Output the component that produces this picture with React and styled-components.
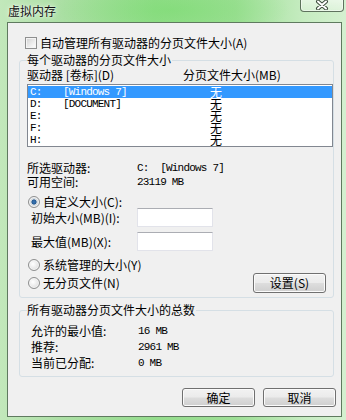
import React from "react";
import styled, { createGlobalStyle } from "styled-components";

const Global = createGlobalStyle`
  html, body { margin: 0; padding: 0; background: #a9e3a2; }
  body { font-family: "Noto Sans CJK SC", "Noto Sans", sans-serif; }
`;

const cjk = `"Noto Sans CJK SC", "Noto Sans", sans-serif`;
const mono = `"Liberation Mono", "Noto Sans CJK SC", monospace`;

const Window = styled.div`
  width: 346px;
  height: 420px;
  box-sizing: border-box;
  display: flex;
  flex-direction: column;
  padding: 0 4px 3px 7px;
  background:
    radial-gradient(ellipse 120px 30px at 170px 10px, rgba(120, 220, 110, 0.55), rgba(120, 220, 110, 0) 100%),
    linear-gradient(90deg, #c2e8bb 0%, #acdfa5 18%, #95dd8d 45%, #9edf96 68%, #c6ecc1 88%, #d4f0d0 100%);
  overflow: hidden;
`;

const TitleBar = styled.div`
  height: 22px;
  display: flex;
  justify-content: space-between;
  align-items: flex-start;
  margin-left: 1px;
`;

const Title = styled.div`
  font-family: ${cjk};
  font-size: 12px;
  line-height: 22px;
  color: #111;
  text-shadow: 0 0 6px rgba(255, 255, 255, 0.9), 0 0 2px rgba(255, 255, 255, 0.8);
`;

const CloseButton = styled.div`
  width: 44px;
  height: 13px;
  margin-right: -2px;
  margin-top: -1px;
  box-sizing: border-box;
  border: 1px solid rgba(50, 70, 50, 0.75);
  border-top: none;
  border-radius: 0 0 4px 4px;
  background: linear-gradient(180deg, rgba(255, 255, 255, 0.55), rgba(255, 255, 255, 0.25));
  box-shadow: inset 0 0 0 1px rgba(255, 255, 255, 0.45);
  display: flex;
  align-items: center;
  justify-content: center;
`;

const Panel = styled.div`
  flex: 1;
  background: #f0f0f0;
  border: 1px solid #5f7a5f;
  display: flex;
  flex-direction: column;
  padding-top: 13px;
`;

const CheckRow = styled.label`
  display: flex;
  align-items: center;
  gap: 3px;
  height: 14px;
  margin-left: 17px;
  font-family: ${cjk};
  font-size: 12px;
  line-height: 14px;
  color: #000;
`;

const CheckBox = styled.span`
  width: 12px;
  height: 12px;
  box-sizing: border-box;
  border: 1px solid #8e8f8f;
  background: linear-gradient(135deg, #cfcfcf 0%, #eeeeee 60%, #ffffff 100%);
  box-shadow: inset 0 0 0 1px #f4f4f4;
`;

const Group = styled.fieldset`
  margin: ${(p) => p.$mt}px 7px 0 11px;
  padding: ${(p) => p.$pt}px 0 ${(p) => p.$pb}px 7px;
  min-width: 0;
  border: 1px solid #d5dfe5;
  border-radius: 3px;
  display: flex;
  flex-direction: column;
`;

const Legend = styled.legend`
  padding: 0 1px 0 0;
  margin: 0;
  font-family: ${cjk};
  font-size: 12px;
  line-height: 14px;
  color: #000;
`;

const TextRow = styled.div`
  display: grid;
  grid-template-columns: ${(p) => p.$cols};
  height: ${(p) => p.$h || 14}px;
  align-items: center;
  margin-top: ${(p) => p.$mt || 0}px;
  padding-left: ${(p) => p.$pl || 0}px;
  font-family: ${cjk};
  font-size: 12px;
  line-height: 14px;
  color: #000;
  white-space: nowrap;
`;

const Mono = styled.span`
  font-family: ${mono};
  font-size: 11px;
  letter-spacing: -0.8px;
  white-space: pre;
`;

const ListBox = styled.div`
  margin-top: 2px;
  width: 306px;
  box-sizing: border-box;
  border: 1px solid #828790;
  background: #fff;
  padding-top: 1px;
  display: flex;
  flex-direction: column;
`;

const ListRow = styled.div`
  display: grid;
  grid-template-columns: 33px 147px auto;
  height: 12px;
  line-height: 12px;
  padding-left: 2px;
  align-items: center;
  background: ${(p) => (p.$selected ? "#3399ff" : "transparent")};
  color: ${(p) => (p.$selected ? "#fff" : "#000")};
  font-family: ${mono};
  font-size: 11px;
  letter-spacing: -0.8px;
  white-space: pre;
`;

const Size = styled.span`
  font-family: ${cjk};
  font-size: 12px;
  letter-spacing: 0;
  line-height: 12px;
`;

const RadioRow = styled.div`
  display: flex;
  align-items: center;
  gap: 3px;
  height: ${(p) => p.$h || 14}px;
  margin-top: ${(p) => p.$mt || 0}px;
  padding-left: 1px;
  font-family: ${cjk};
  font-size: 12px;
  line-height: 14px;
  color: #000;
  white-space: nowrap;
`;

const Radio = styled.span`
  width: 12px;
  height: 12px;
  box-sizing: border-box;
  border-radius: 50%;
  border: 1px solid #8e8f8f;
  flex: none;
  background: ${(p) =>
    p.$checked
      ? "radial-gradient(circle at 50% 50%, #3a78b8 0%, #255a92 32%, #cfd6dc 40%, #f2f2f2 100%)"
      : "radial-gradient(circle at 40% 40%, #ffffff 0%, #e8e8e8 55%, #cfcfcf 100%)"};
  box-shadow: inset 0 0 0 1px #f6f6f6;
`;

const InputRow = styled.div`
  display: grid;
  grid-template-columns: 106px 76px;
  align-items: center;
  height: 19px;
  margin-top: ${(p) => p.$mt || 0}px;
  padding-left: 4px;
  font-family: ${cjk};
  font-size: 12px;
  line-height: 14px;
  color: #000;
  white-space: nowrap;
`;

const TextBox = styled.div`
  height: 19px;
  box-sizing: border-box;
  background: #fff;
  border: 1px solid #e2e3ea;
  border-top-color: #abadb3;
`;

const SettingsRow = styled.div`
  display: flex;
  align-items: center;
  justify-content: space-between;
  height: 20px;
  margin-top: 1px;
  padding-left: 1px;
  padding-right: 7px;
  font-family: ${cjk};
  font-size: 12px;
  line-height: 14px;
  color: #000;
`;

const RadioLabel = styled.div`
  display: flex;
  align-items: center;
  gap: 3px;
`;

const Button = styled.button`
  width: ${(p) => p.$w}px;
  height: ${(p) => p.$h || 19}px;
  box-sizing: border-box;
  padding: 0;
  border: 1px solid #707070;
  border-radius: 3px;
  background: linear-gradient(180deg, #f2f2f2 0%, #ebebeb 48%, #dddddd 52%, #cfcfcf 100%);
  box-shadow: inset 0 0 0 1px #fbfbfb;
  font-family: ${cjk};
  font-size: 12px;
  line-height: 14px;
  color: #000;
  display: flex;
  align-items: center;
  justify-content: center;
`;

const ButtonBar = styled.div`
  display: flex;
  justify-content: flex-end;
  gap: 8px;
  margin: 11px 5px 9px 0;
`;

export default function App() {
  const drives = [
    { d: "C:", v: "[Windows 7]", selected: true },
    { d: "D:", v: "[DOCUMENT]" },
    { d: "E:", v: "" },
    { d: "F:", v: "" },
    { d: "H:", v: "" },
  ];
  return (
    <>
      <Global />
      <Window>
        <TitleBar>
          <Title>虚拟内存</Title>
          <CloseButton>
            <svg width="14" height="10" viewBox="0 0 14 10">
              <path d="M3 1.5 L11 8.5 M11 1.5 L3 8.5" stroke="#3b4a3b" strokeWidth="4" strokeLinecap="round" />
              <path d="M3 1.5 L11 8.5 M11 1.5 L3 8.5" stroke="#ffffff" strokeWidth="2" strokeLinecap="round" />
            </svg>
          </CloseButton>
        </TitleBar>
        <Panel>
          <CheckRow>
            <CheckBox />
            <span>自动管理所有驱动器的分页文件大小(A)</span>
          </CheckRow>
          <Group $mt={3} $pt={1} $pb={4}>
            <Legend>每个驱动器的分页文件大小</Legend>
            <TextRow $cols="156px auto">
              <span>驱动器 [卷标](D)</span>
              <span>分页文件大小(MB)</span>
            </TextRow>
            <ListBox>
              {drives.map((r) => (
                <ListRow key={r.d} $selected={r.selected}>
                  <span>{r.d}</span>
                  <span>{r.v}</span>
                  <Size>无</Size>
                </ListRow>
              ))}
            </ListBox>
            <TextRow $cols="110px auto" $mt={14}>
              <span>所选驱动器:</span>
              <Mono>C:  [Windows 7]</Mono>
            </TextRow>
            <TextRow $cols="110px auto">
              <span>可用空间:</span>
              <Mono>23119 MB</Mono>
            </TextRow>
            <RadioRow $mt={6} $h={13}>
              <Radio $checked />
              <span>自定义大小(C):</span>
            </RadioRow>
            <InputRow>
              <span>初始大小(MB)(I):</span>
              <TextBox />
            </InputRow>
            <InputRow $mt={5}>
              <span>最大值(MB)(X):</span>
              <TextBox />
            </InputRow>
            <RadioRow $mt={7}>
              <Radio />
              <span>系统管理的大小(Y)</span>
            </RadioRow>
            <SettingsRow>
              <RadioLabel>
                <Radio />
                <span>无分页文件(N)</span>
              </RadioLabel>
              <Button $w={73} $h={20}>设置(S)</Button>
            </SettingsRow>
          </Group>
          <Group $mt={5} $pt={6} $pb={5}>
            <Legend>所有驱动器分页文件大小的总数</Legend>
            <TextRow $cols="107px auto" $h={16} $pl={4}>
              <span>允许的最小值:</span>
              <Mono>16 MB</Mono>
            </TextRow>
            <TextRow $cols="107px auto" $h={16} $pl={4}>
              <span>推荐:</span>
              <Mono>2961 MB</Mono>
            </TextRow>
            <TextRow $cols="107px auto" $h={16} $pl={4}>
              <span>当前已分配:</span>
              <Mono>0 MB</Mono>
            </TextRow>
          </Group>
          <ButtonBar>
            <Button $w={73}>确定</Button>
            <Button $w={73}>取消</Button>
          </ButtonBar>
        </Panel>
      </Window>
    </>
  );
}
